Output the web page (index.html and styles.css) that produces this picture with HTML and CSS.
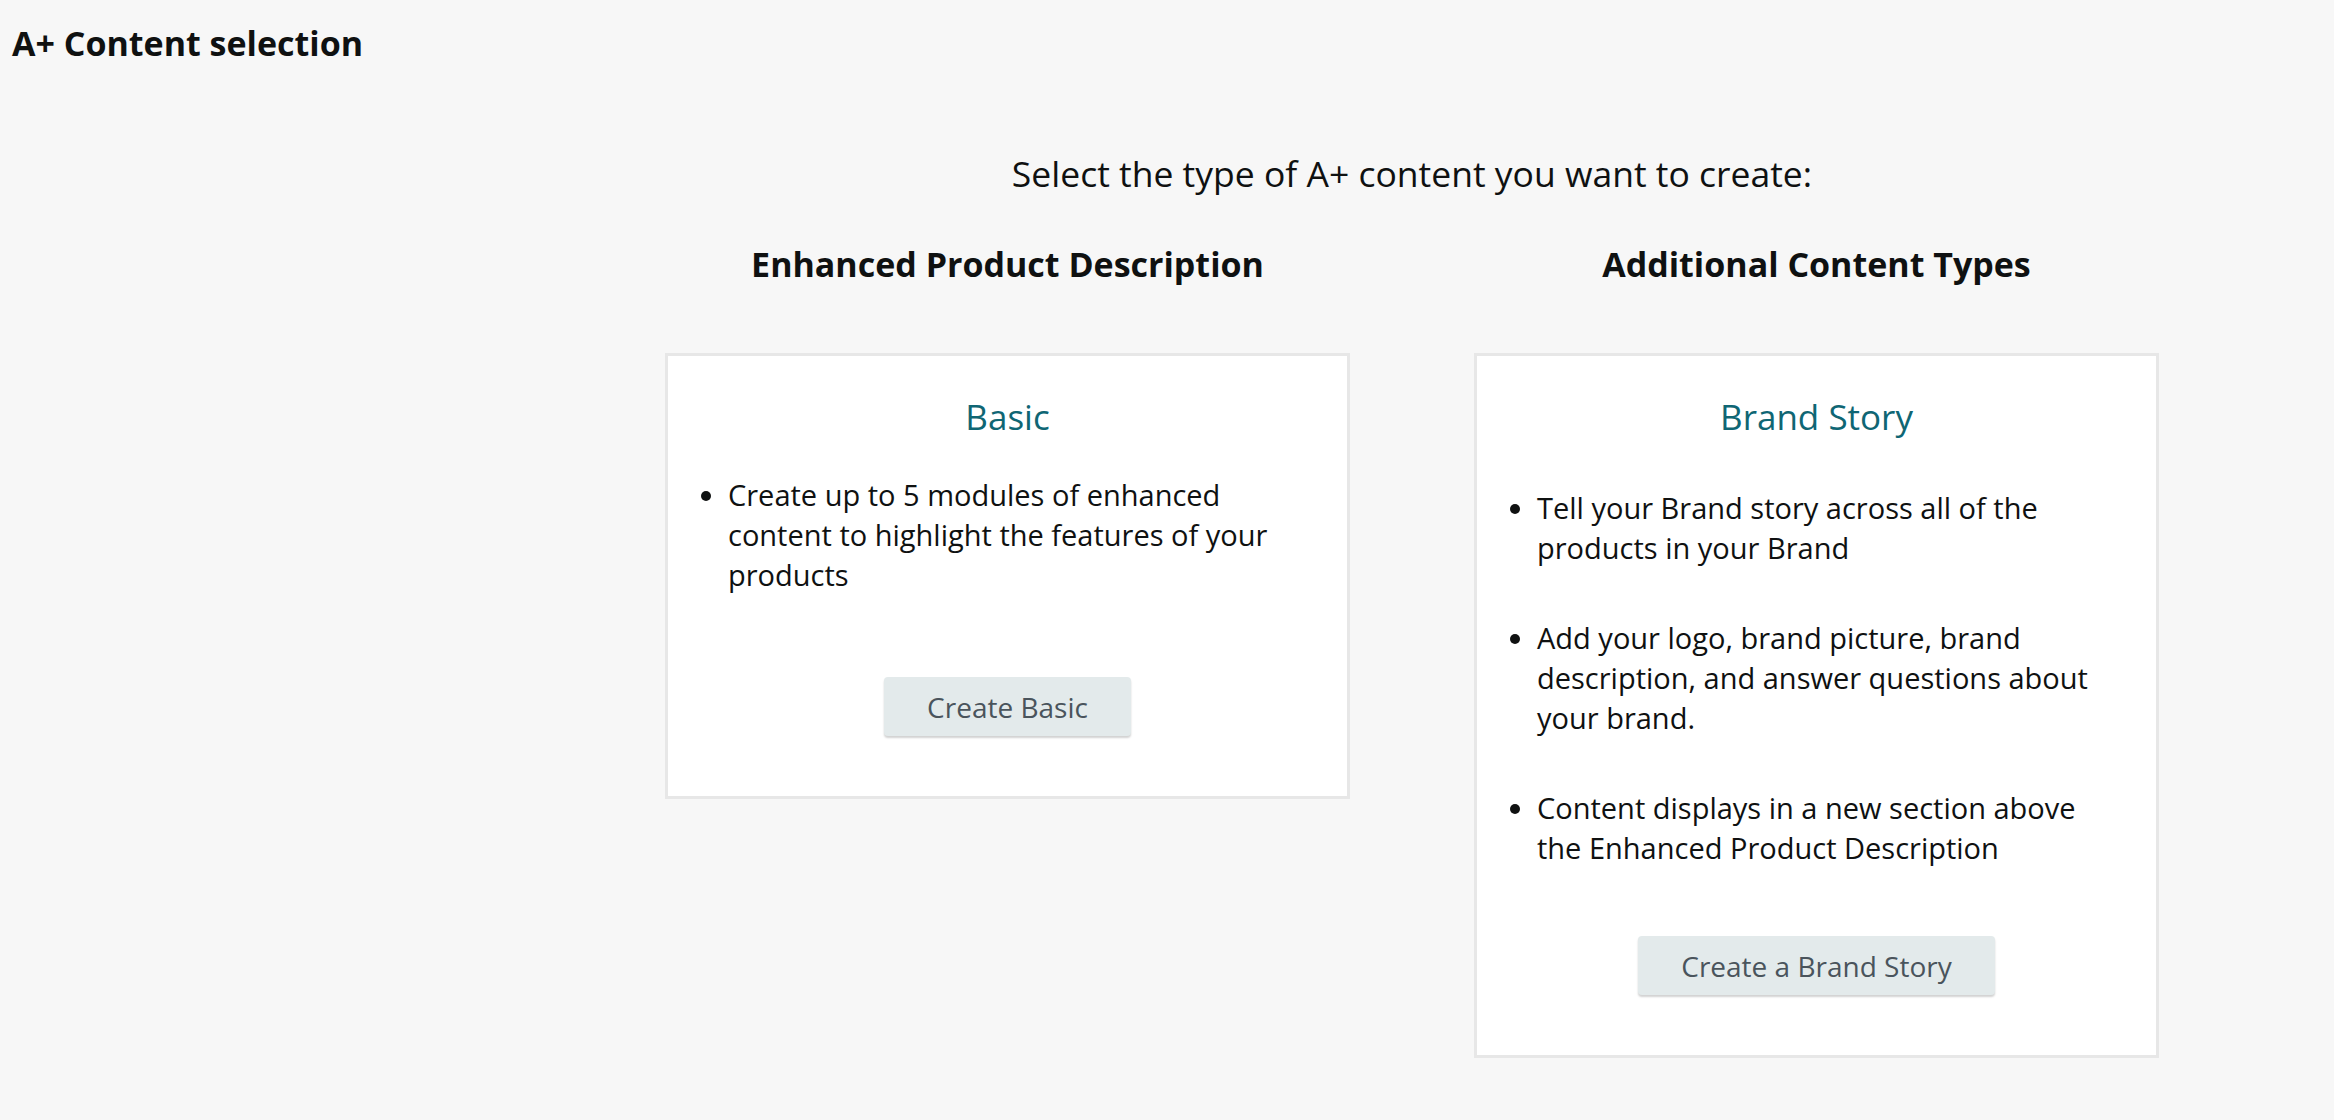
FILE: index.html
```html
<!DOCTYPE html>
<html lang="en">
<head>
<meta charset="utf-8">
<title>A+ Content selection</title>
<link rel="stylesheet" href="styles.css">
</head>
<body>
<div class="page">
  <h1 class="page-title">A+ Content selection</h1>
  <main class="selection">
    <p class="prompt">Select the type of A+ content you want to create:</p>
    <div class="columns">
      <section class="column">
        <h2 class="column-title">Enhanced Product Description</h2>
        <div class="card card-basic">
          <h3 class="card-title">Basic</h3>
          <ul class="features">
            <li>Create up to 5 modules of enhanced<br>content to highlight the features of your<br>products</li>
          </ul>
          <div class="actions">
            <button class="btn" type="button">Create Basic</button>
          </div>
        </div>
      </section>
      <section class="column">
        <h2 class="column-title">Additional Content Types</h2>
        <div class="card card-story">
          <h3 class="card-title">Brand Story</h3>
          <ul class="features">
            <li>Tell your Brand story across all of the<br>products in your Brand</li>
            <li>Add your logo, brand picture, brand<br>description, and answer questions about<br>your brand.</li>
            <li>Content displays in a new section above<br>the Enhanced Product Description</li>
          </ul>
          <div class="actions">
            <button class="btn" type="button">Create a Brand Story</button>
          </div>
        </div>
      </section>
    </div>
  </main>
</div>
</body>
</html>
```
FILE: styles.css
```css
* { box-sizing: border-box; }

html, body {
  margin: 0;
  padding: 0;
  background: #f7f7f7;
}

body {
  font-family: "Open Sans", Lato, "Liberation Sans", sans-serif;
  color: #0f1111;
  font-size: 29px;
  line-height: 40px;
}

.page {
  padding: 23px 12px 0;
  min-height: 1120px;
}

.page-title {
  margin: 0;
  font-size: 34px;
  line-height: 40px;
  font-weight: 700;
}

.selection {
  margin-left: 653px;
  width: 1494px;
}

.prompt {
  margin: 90px 0 0;
  text-align: center;
  font-size: 35.5px;
  line-height: 40px;
}

.columns {
  display: grid;
  grid-template-columns: 685px 685px;
  column-gap: 124px;
  align-items: start;
  margin-top: 51px;
}

.column-title {
  margin: 0 0 69px;
  text-align: center;
  font-size: 34px;
  line-height: 40px;
  font-weight: 700;
}

.card {
  background: #ffffff;
  border: 3px solid #e7e7e7;
  padding: 41px 40px 60px;
}

.card-title {
  margin: 0;
  text-align: center;
  font-size: 35px;
  line-height: 40px;
  font-weight: 400;
  color: #0f6674;
}

.features {
  margin: 0;
  padding-left: 20px;
  list-style: disc;
}

.card-basic .features {
  margin-top: 38px;
  margin-bottom: 82px;
}

.card-story .features {
  margin-top: 51px;
  margin-bottom: 68px;
}

.card-story .features li + li {
  margin-top: 50px;
}

.actions {
  display: flex;
  justify-content: center;
}

.btn {
  font-family: inherit;
  font-size: 28px;
  line-height: 40px;
  height: 59px;
  padding: 0 43px;
  color: #4a545c;
  background: #e3eaeb;
  border: 0;
  border-radius: 4px;
  box-shadow: 0 2px 2px rgba(0, 0, 0, 0.18);
  cursor: pointer;
}
```
